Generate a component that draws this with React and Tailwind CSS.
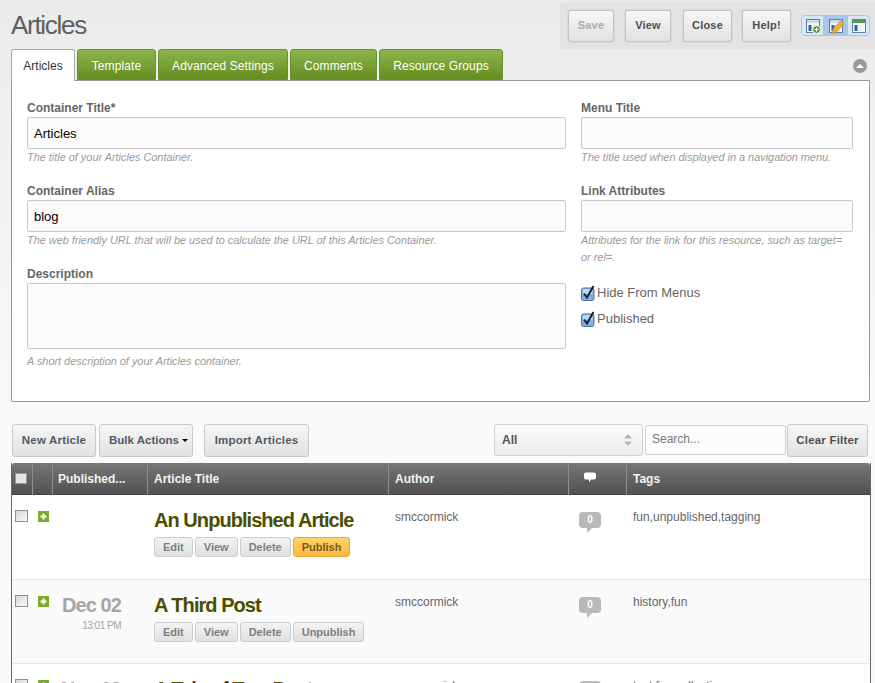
const FONT = "font-['Liberation_Sans',Arial,sans-serif]";

const ToolbarBtn = ({ children, disabled, className = "" }) => (
  <button
    className={`h-[32px] rounded-[3px] border border-[#c4c4c4] bg-gradient-to-b from-[#f6f6f6] to-[#e2e2e2] text-[11px] font-bold tracking-[0.2px] shadow-[0_0_1px_#888] ${disabled ? "text-[#aaaaaa]" : "text-[#4f4f4f]"} ${className}`}
  >
    {children}
  </button>
);

const ActionBtn = ({ children, className = "" }) => (
  <button
    className={`h-[33px] rounded-[3px] border border-[#c9c9c9] bg-gradient-to-b from-[#f6f6f6] to-[#e2e2e2] text-[11.5px] font-bold tracking-[0.2px] text-[#505a66] ${className}`}
  >
    {children}
  </button>
);

const RowBtn = ({ children, orange }) => (
  <button
    className={`h-[20px] rounded-[3px] border px-[8px] text-[11px] font-bold ${
      orange
        ? "border-[#e3a93a] bg-gradient-to-b from-[#ffd466] to-[#fbb93c] text-[#77591c]"
        : "border-[#cccccc] bg-gradient-to-b from-[#f3f3f3] to-[#e0e0e0] text-[#7f7f7f]"
    }`}
  >
    {children}
  </button>
);

const Field = ({ label, help, value, className = "" }) => (
  <div className={className}>
    <div className="mb-px h-[16px] text-[12px] leading-[16px] font-bold text-[#666666]">{label}</div>
    <div className="h-[32px] rounded-[2px] border border-[#c8c8c8] bg-[#fbfbfb] px-[6px] text-[13px] leading-[32px] text-black">
      {value}
    </div>
    <p className="text-[10.9px] leading-[17px] text-[#9a9a9a] italic">{help}</p>
  </div>
);

const Check = ({ label }) => (
  <div className="flex h-[16px] items-center gap-px text-[13px] text-[#666666]">
    <svg width="15" height="16" viewBox="0 0 15 16">
      <rect x="0.5" y="3" width="12.5" height="12.5" rx="2" fill="#7db2e6" stroke="#5a6f88" />
      <rect x="2" y="4" width="9.5" height="5" rx="1" fill="#b9d8f4" />
      <path d="M3 8.5 L6 12.5 L12.5 1" fill="none" stroke="#14202c" strokeWidth="2" />
    </svg>
    {label}
  </div>
);

const Box = () => (
  <span className="block h-[12px] w-[13px] border border-[#8f8f8f] bg-gradient-to-br from-[#d6d6d6] to-[#fbfbfb]" />
);

const Plus = () => (
  <span className="flex h-[11px] w-[11px] items-center justify-center bg-[#7cab2b]">
    <svg width="7" height="7" viewBox="0 0 7 7">
      <path d="M3.5 0.5 V6.5 M0.5 3.5 H6.5" stroke="#fff" strokeWidth="2" />
    </svg>
  </span>
);

const Bubble = () => (
  <span className="relative block h-[22px] w-[22px]">
    <svg width="22" height="22" viewBox="0 0 22 22" className="absolute top-0 left-0">
      <path
        d="M4 0 H18 Q22 0 22 4 V12 Q22 16 18 16 H13 L8 21 V16 H4 Q0 16 0 12 V4 Q0 0 4 0 Z"
        fill="#b9b9b9"
      />
    </svg>
    <span className="absolute top-0 left-0 w-full text-center text-[10px] leading-[16px] font-bold text-white">0</span>
  </span>
);

const cols = "grid grid-cols-[21px_20px_95px_241px_180px_58px_1fr]";

const Row = ({ title, tags, date, time, publish, bg, height }) => (
  <div className={`${cols} ${height} border-b border-[#e6e6e6] ${bg}`}>
    <div className="pt-[15px] pl-[3px]">
      <Box />
    </div>
    <div className="pt-[16px] pl-[5px]">
      <Plus />
    </div>
    <div className="pr-[27px] text-right">
      {date && (
        <>
          <div className="pt-[13px] text-[20px] leading-[24px] font-bold tracking-[-0.9px] text-[#a5a5a5]">{date}</div>
          <div className="mt-[2px] text-[10px] leading-[14px] tracking-[-0.5px] text-[#a5a5a5]">{time}</div>
        </>
      )}
    </div>
    <div className="pl-[6px]">
      <div className="pt-[12px] text-[20px] leading-[26px] font-bold tracking-[-0.95px] whitespace-nowrap text-[#4d4d00]">{title}</div>
      <div className="mt-[4px] flex gap-[2px]">
        <RowBtn>Edit</RowBtn>
        <RowBtn>View</RowBtn>
        <RowBtn>Delete</RowBtn>
        <RowBtn orange={publish}>{publish ? "Publish" : "Unpublish"}</RowBtn>
      </div>
    </div>
    <div className="pt-[14px] pl-[6px] text-[12px] leading-[16px] text-[#666666]">smccormick</div>
    <div className="pt-[17px] pl-[10px]">
      <Bubble />
    </div>
    <div className="pt-[14px] pl-[6px] text-[12px] leading-[16px] text-[#666666]">{tags}</div>
  </div>
);

const Th = ({ children, last }) => (
  <div
    className={`h-full px-[6px] text-[12px] leading-[32px] font-bold text-[#f2f2f2] ${last ? "" : "border-r border-[#8f8f8f]"}`}
  >
    {children}
  </div>
);

const PageIcon = ({ active, children }) => (
  <span
    className={`flex h-[21px] w-[23px] items-center justify-center border border-[#a9c6e6] first:rounded-l-[4px] last:rounded-r-[4px] ${active ? "bg-[#a6c9ec]" : "bg-[#d8e7f6]"}`}
  >
    <svg width="16" height="16" viewBox="0 0 16 16">{children}</svg>
  </span>
);

const Layout = ({ top = "#cfd8e6" }) => (
  <>
    <rect x="1.5" y="1.5" width="13" height="13" fill="#f3f5f8" stroke="#5f7fa3" />
    <rect x="2" y="2" width="12" height="3" fill={top} />
    <rect x="3.5" y="7" width="3" height="6" fill="#2d62a8" />
  </>
);

export default function App() {
  return (
    <div className={`${FONT} h-[683px] w-[875px] overflow-hidden bg-gradient-to-b from-[#ebebeb] to-[#fafafa] to-[420px]`}>
      {/* encabezado */}
      <div className="flex h-[49px] items-start justify-between">
        <h1 className="pt-[8px] pl-[11px] text-[26px] leading-[34px] tracking-[-1.3px] text-[#5f5f5f]">Articles</h1>
        <div className="mt-[2px] flex h-[47px] w-[315px] items-center rounded-l-[3px] bg-[#e3e3e3] pl-[8px]">
          <ToolbarBtn disabled className="w-[46px]">Save</ToolbarBtn>
          <ToolbarBtn className="ml-[11px] w-[46px]">View</ToolbarBtn>
          <ToolbarBtn className="ml-[12px] w-[49px]">Close</ToolbarBtn>
          <ToolbarBtn className="ml-[10px] w-[49px]">Help!</ToolbarBtn>
          <div className="ml-[10px] flex">
            <PageIcon>
              <Layout />
              <circle cx="11.5" cy="11.5" r="4" fill="#5d9b32" stroke="#fff" />
              <path d="M11.5 9.5 V13.5 M9.5 11.5 H13.5" stroke="#fff" />
            </PageIcon>
            <PageIcon active>
              <Layout />
              <path d="M4 15.5 L5 11 L12.5 3 L16 6 L8.5 14 Z" fill="#f0b13c" stroke="#c98a1e" strokeWidth="0.7" />
            </PageIcon>
            <PageIcon>
              <Layout top="#4f9a46" />
            </PageIcon>
          </div>
        </div>
      </div>

      {/* pestañas */}
      <div className="relative z-10 mx-[11px] flex h-[32px] items-start gap-[2px]">
        <div className="h-[32px] w-[64px] rounded-t-[3px] border border-b-0 border-[#aaaaaa] bg-white text-center text-[12px] leading-[32px] text-[#333333]">
          Articles
        </div>
        {[
          ["Template", "w-[79px]"],
          ["Advanced Settings", "w-[130px]"],
          ["Comments", "w-[87px]"],
          ["Resource Groups", "w-[124px]"],
        ].map(([t, w]) => (
          <div
            key={t}
            className={`h-[31px] ${w} rounded-t-[3px] border border-[#6b8f2e] bg-gradient-to-b from-[#8cb44c] to-[#648f1c] text-center text-[12px] leading-[32px] tracking-[0.1px] text-white`}
          >
            {t}
          </div>
        ))}
        <span className="relative mt-[10px] -mr-[3px] ml-auto flex h-[14px] w-[14px] items-center justify-center rounded-full bg-[#9a9a9a]">
          <span className="h-0 w-0 border-x-[4px] border-b-[4px] border-x-transparent border-b-white" />
        </span>
      </div>

      {/* formulario */}
      <div className="mr-[5px] -mt-px ml-[11px] flex h-[322px] gap-[15px] rounded-b-[2px] border border-[#999999] bg-white pt-[19px] pl-[15px]">
        <div className="w-[539px]">
          <Field label="Container Title*" value="Articles" help="The title of your Articles Container." />
          <Field className="mt-[17px]" label="Container Alias" value="blog" help="The web friendly URL that will be used to calculate the URL of this Articles Container." />
          <div className="mt-[17px]">
            <div className="mb-px h-[16px] text-[12px] leading-[16px] font-bold text-[#666666]">Description</div>
            <div className="h-[66px] rounded-[2px] border border-[#c8c8c8] bg-[#fbfbfb]" />
            <p className="mt-[4px] text-[10.9px] leading-[17px] text-[#9a9a9a] italic">A short description of your Articles container.</p>
          </div>
        </div>
        <div className="w-[272px]">
          <Field label="Menu Title" help="The title used when displayed in a navigation menu." />
          <Field className="mt-[17px]" label="Link Attributes" help="Attributes for the link for this resource, such as target= or rel=." />
          <div className="mt-[19px] flex flex-col gap-[10px]">
            <Check label="Hide From Menus" />
            <Check label="Published" />
          </div>
        </div>
      </div>

      {/* barra de acciones */}
      <div className="mt-[22px] flex h-[33px] items-start pl-[12px]">
        <ActionBtn className="w-[84px]">New Article</ActionBtn>
        <ActionBtn className="ml-[3px] w-[94px] pl-[9px] text-left !tracking-normal">
          Bulk Actions <span className="inline-block h-0 w-0 border-x-[3px] border-t-[3px] border-x-transparent border-t-black align-middle" />
        </ActionBtn>
        <ActionBtn className="ml-[11px] w-[105px]">Import Articles</ActionBtn>
        <div className="ml-[185px] flex h-[32px] w-[149px] items-center justify-between rounded-[3px] border border-[#d0d0d0] bg-gradient-to-b from-[#fafafa] to-[#ececec] pr-[10px] pl-[7px] text-[12px] font-bold text-[#555555]">
          All
          <svg width="8" height="12" viewBox="0 0 8 12">
            <path d="M4 0 L8 4.5 H0 Z M0 7.5 H8 L4 12 Z" fill="#b5b5b5" />
          </svg>
        </div>
        <div className="mt-px ml-[2px] h-[30px] w-[141px] rounded-[2px] border border-[#d0d0d0] bg-[#fbfbfb] px-[6px] text-[12px] leading-[26px] text-[#777777]">
          Search...
        </div>
        <ActionBtn className="ml-px h-[32px] w-[81px] !text-[#4f4f4f]">Clear Filter</ActionBtn>
      </div>

      {/* tabla */}
      <div className="mt-[6px] ml-[11px] w-[860px] border-x border-[#666666] bg-white">
        <div className={`${cols} h-[32px] rounded-t-[3px] border-b border-[#444444] bg-gradient-to-b from-[#777777] to-[#515151]`}>
          <Th>
            <span className="mt-[10px] -ml-[3px] block h-[11px] w-[12px] border border-[#999999] bg-[#e5e5e5]" />
          </Th>
          <Th />
          <Th>
            <span className="-ml-px">Published...</span>
          </Th>
          <Th>Article Title</Th>
          <Th>Author</Th>
          <Th>
            <svg width="12" height="11" viewBox="0 0 12 10" className="mt-[9px] ml-[9px]">
              <path d="M2 0 H10 Q12 0 12 2 V5 Q12 7 10 7 H7 L5 10 V7 H2 Q0 7 0 5 V2 Q0 0 2 0 Z" fill="#fff" />
            </svg>
          </Th>
          <Th last>Tags</Th>
        </div>
        <Row title="An Unpublished Article" tags="fun,unpublished,tagging" publish bg="bg-white" height="h-[85px]" />
        <Row title="A Third Post" tags="history,fun" date="Dec 02" time="13:01 PM" bg="bg-[#fafafa]" height="h-[84px]" />
        <Row title="A Tale of Two Posts" tags="test,fun,collection" date="Nov 19" time="13:01 PM" bg="bg-white" height="h-[84px]" />
      </div>
    </div>
  );
}
